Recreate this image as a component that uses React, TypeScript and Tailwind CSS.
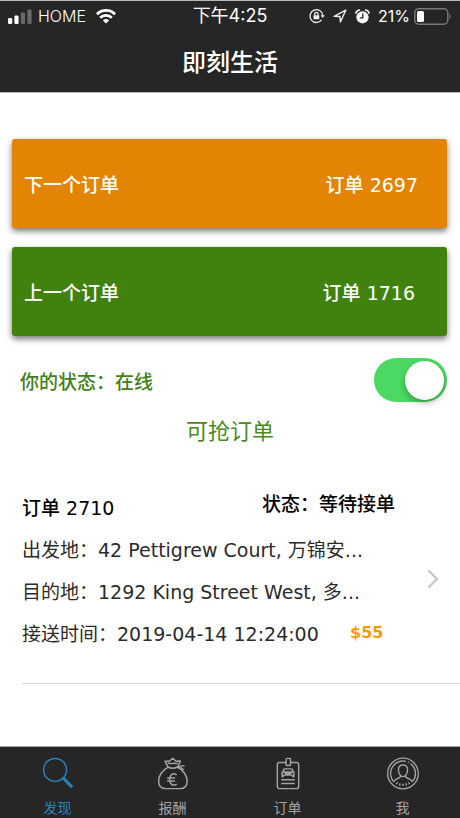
import { useState } from 'react'
import type { ReactNode } from 'react'
import clsx from 'clsx'

function SignalIcon() {
  return (
    <svg width="24" height="15" viewBox="0 0 24 15" fill="#fff" aria-hidden="true">
      <rect x="0" y="9" width="4.2" height="6" rx="1.2" />
      <rect x="6.4" y="6.5" width="4.2" height="8.5" rx="1.2" />
      <rect x="12.8" y="3.5" width="4.2" height="11.5" rx="1.2" fill="#6a6a6a" />
      <rect x="19.4" y="0.5" width="4.2" height="14.5" rx="1.2" fill="#6a6a6a" />
    </svg>
  )
}

function WifiIcon() {
  return (
    <svg width="20" height="15" viewBox="0 0 20 15" fill="none" stroke="#fff" strokeWidth="2.7" aria-hidden="true">
      <path d="M1 5.2a12.7 12.7 0 0 1 18 0" />
      <path d="M4.2 8.7a8.2 8.2 0 0 1 11.6 0" />
      <path d="M10 14.6 6.9 11.4a4.4 4.4 0 0 1 6.2 0z" fill="#fff" stroke="none" />
    </svg>
  )
}

function RotationLockIcon() {
  return (
    <svg width="16" height="16" viewBox="0 0 16 16" fill="none" stroke="#eee" strokeWidth="1.3" aria-hidden="true">
      <path d="M12.6 11.9a6.4 6.4 0 1 1 1.2-4.6" />
      <path d="M11.6 7.2h4.2l-2 2.8z" fill="#eee" stroke="none" />
      <rect x="4.5" y="7.2" width="5.8" height="4" rx="0.6" fill="#eee" stroke="none" />
      <path d="M5.7 7.4V6a1.7 1.7 0 0 1 3.4 0v1.4" />
    </svg>
  )
}

function LocationIcon() {
  return (
    <svg width="14" height="14" viewBox="0 0 14 14" fill="none" stroke="#eee" strokeWidth="1.4" strokeLinejoin="round" aria-hidden="true">
      <path d="M1.2 7.4 12.8 1.2 7.4 12.9 6.9 7.5z" />
    </svg>
  )
}

function AlarmIcon() {
  return (
    <svg width="15" height="15" viewBox="0 0 15 15" fill="none" aria-hidden="true">
      <circle cx="7.5" cy="8.3" r="6.1" fill="#fff" />
      <path d="M1 4.2A4 4 0 0 1 4.4 1M14 4.2A4 4 0 0 0 10.6 1" stroke="#fff" strokeWidth="1.6" strokeLinecap="round" />
      <path d="M7.8 4.6v4.2H4.8" stroke="#262626" strokeWidth="1.3" />
    </svg>
  )
}

function BatteryIcon() {
  return (
    <svg width="38" height="17" viewBox="0 0 38 17" fill="none" aria-hidden="true">
      <rect x="0.8" y="0.8" width="33" height="15.4" rx="4" stroke="#777" strokeWidth="1.5" />
      <rect x="3" y="3" width="7" height="11" rx="1.5" fill="#fff" />
      <path d="M35.6 6c1.6.6 1.6 4.4 0 5z" fill="#777" />
    </svg>
  )
}

function SearchIcon() {
  return (
    <svg width="34" height="34" viewBox="0 0 34 34" fill="none" stroke="currentColor" strokeWidth="1.5" aria-hidden="true">
      <circle cx="14" cy="13.3" r="11.8" />
      <path d="M21.8 22.3l2.2-2" />
      <path d="M22.6 21.9 31.6 31" strokeWidth="3.2" />
    </svg>
  )
}

function MoneyBagIcon() {
  return (
    <svg width="34" height="34" viewBox="0 0 34 34" fill="none" stroke="currentColor" strokeWidth="1.5" strokeLinejoin="round" strokeLinecap="round" aria-hidden="true">
      <path d="M11.6 10.2 8.8 4.3 13.2 4.4 16.7 1.2 20.2 4.4 24.6 4.2 21.800 10.200" />
      <path d="M11.600 10.300c3 1.400 7.200 1.400 10.300 0M12 6.600c1.400-.9 2.400.9 4.600 0s3 .7 4.600 0" />
      <path d="M11.700 10.600C6.400 13.200 2.200 19 2.200 24.600c0 5.600 2.400 8 7.400 8h14.600c5 0 7.400-2.400 7.400-8 0-5.600-4.400-11.400-9.700-14" />
      <path d="M22 10.400c2.400-.5 4-2.500 6.400-1.100M22.400 10.800c2.400-.2 4.200.2 5.400 2.200" />
      <path d="M20.400 18.100c-3.600-2.200-6.800.2-6.800 5s3.200 7.200 6.800 5M11.600 21.600h7M11.600 24.700h7" />
    </svg>
  )
}

function PermitIcon() {
  return (
    <svg width="34" height="34" viewBox="0 0 34 34" fill="none" stroke="currentColor" strokeWidth="1.5" strokeLinejoin="round" aria-hidden="true">
      <path d="M15 5.600H8.200a2.200 2.200 0 0 0-2.200 2.200v22.600a2.200 2.200 0 0 0 2.200 2.200h17.600a2.200 2.200 0 0 0 2.200-2.200V7.800a2.200 2.200 0 0 0-2.200-2.200H19.600" />
      <rect x="15" y="1.4" width="4.6" height="7.4" rx="1.2" />
      <path d="M10 23.500h14M10 27.200h14" />
      <path
        fillRule="evenodd"
        fill="currentColor"
        stroke="none"
        d="M13.200 11.600h7.600c.7 0 1.100.4 1.300 1l.8 2.200c.6.3.9.8.9 1.500v4.500h-2.600v-1.500h-8.400v1.500h-2.600v-4.500c0-.7.3-1.200.9-1.500l.8-2.200c.2-.6.6-1 1.300-1zM13.500 13l-.6 1.800h8.200l-.6-1.800zM12.600 16.200a1 1 0 1 0 .1 0zM21.400 16.200a1 1 0 1 0 .1 0z"
      />
    </svg>
  )
}

function ProfileIcon() {
  return (
    <svg width="34" height="34" viewBox="0 0 34 34" fill="none" stroke="currentColor" strokeWidth="1.4" aria-hidden="true">
      <circle cx="17" cy="17" r="15.8" />
      <path d="M7.500 25.600A12.800 12.800 0 0 1 19.800 4.500M22 5.200l1.200.6M24.800 6.800A12.800 12.800 0 0 1 26.500 25.600" />
      <path d="M17 8.200c-3 0-4.700 2-4.700 5s1.700 7 4.700 7 4.700-4 4.700-7-1.700-5-4.700-5z" />
      <path d="M14.600 19.500c-.2 1.600-1.600 2.300-3.600 2.900-1.900.6-3 1.500-3.500 3.200M19.400 19.500c.2 1.600 1.600 2.300 3.600 2.900 1.900.6 3 1.500 3.500 3.200" />
      <path d="M10.200 26.600a12 12 0 0 0 13.600 0" strokeWidth="2.4" strokeDasharray="1.4 1.8" />
    </svg>
  )
}

interface OrderCardProps {
  label: string
  order: string
  className: string
}

function OrderCard({ label, order, className }: OrderCardProps) {
  return (
    <button
      type="button"
      className={clsx(
        'flex h-[89px] w-full items-center justify-between rounded-[3px] pt-1 pl-3 text-[19px] font-medium text-white shadow-[0_3px_6px_rgba(0,0,0,0.55)]',
        className,
      )}
    >
      <span>{label}</span>
      <span>{order}</span>
    </button>
  )
}

interface TabProps {
  label: string
  icon: ReactNode
  active?: boolean
}

function Tab({ label, icon, active }: TabProps) {
  return (
    <a
      href="#"
      className={clsx('flex flex-1 flex-col items-center pt-[10px]', active ? 'text-[#2b83ba]' : 'text-[#a3a3a3]')}
    >
      {icon}
      <span className="mt-2 text-sm">{label}</span>
    </a>
  )
}

function App() {
  const [online, setOnline] = useState(true)

  return (
    <div className="flex min-h-screen flex-col bg-white font-['DejaVu_Sans','Noto_Sans_CJK_SC',sans-serif]">
      <header className="border-t border-b border-[#b8b8b8] bg-[#262626] text-white">
        <div className="grid h-[30px] grid-cols-[1fr_auto_1fr] items-center px-2 font-['Inter','Noto_Sans_CJK_SC',sans-serif] text-base">
          <div className="flex items-center gap-[6px]">
            <SignalIcon />
            <span className="font-light">HOME</span>
            <span className="ml-1">
              <WifiIcon />
            </span>
          </div>
          <span className="text-lg">下午4:25</span>
          <div className="flex items-center justify-end">
            <RotationLockIcon />
            <span className="ml-2">
              <LocationIcon />
            </span>
            <span className="ml-2">
              <AlarmIcon />
            </span>
            <span className="ml-2 mr-1">21%</span>
            <BatteryIcon />
          </div>
        </div>
        <h1 className="h-[61px] text-center text-2xl leading-[64px] font-medium">即刻生活</h1>
      </header>

      <main className="flex-1">
        <div className="space-y-[19px] pt-[46px] pl-3 pr-[13px]">
          <OrderCard label="下一个订单" order="订单 2697" className="bg-[#e38403] pr-[29px]" />
          <OrderCard label="上一个订单" order="订单 1716" className="bg-[#41820f] pr-8" />
        </div>

        <div className="mt-[22px] flex items-center justify-between pl-5 pr-[13px]">
          <label htmlFor="online" className="pt-1 text-[19px] font-medium text-[#41801a]">
            你的状态：{online ? '在线' : '离线'}
          </label>
          <input
            id="online"
            type="checkbox"
            role="switch"
            checked={online}
            onChange={(e) => setOnline(e.target.checked)}
            className="flex h-11 w-[73px] appearance-none items-center rounded-full bg-gray-300 px-[3px] transition before:size-[39px] before:rounded-full before:bg-white before:shadow-[0_3px_6px_rgba(0,0,0,0.3)] checked:justify-end checked:bg-[#4bd963]"
          />
        </div>

        <h2 className="mt-3 text-center text-[22px] leading-9 text-[#4a8a22]">可抢订单</h2>

        <ul>
          <li className="mt-9 ml-[22px] border-b border-[#d4d4d4]">
            <a href="#" className="flex items-center pb-3 text-[19px] text-[#2b2b2b]">
              <div className="flex-1 pt-px pb-4 leading-[42px] whitespace-nowrap">
                <div className="grid grid-cols-[240px_1fr] font-medium text-black">
                  <span>订单 2710</span>
                  <span className="-mt-1">状态：等待接单</span>
                </div>
                <p>出发地：42 Pettigrew Court, 万锦安...</p>
                <p>目的地：1292 King Street West, 多...</p>
                <div className="grid grid-cols-[328px_1fr]">
                  <span>接送时间：2019-04-14 12:24:00</span>
                  <span className="text-base leading-10 font-bold text-[#f59a0c]">$55</span>
                </div>
              </div>
              <svg width="12" height="20" viewBox="0 0 12 20" fill="none" stroke="#c4c4c4" strokeWidth="2.2" className="mr-[21px]" aria-hidden="true">
                <path d="M1.500 1.500 10 10 1.500 18.500" />
              </svg>
            </a>
          </li>
        </ul>
      </main>

      <nav className="flex h-[72px] border-t border-[#a8a8a8] bg-[#262626]">
        <Tab label="发现" icon={<SearchIcon />} active />
        <Tab label="报酬" icon={<MoneyBagIcon />} />
        <Tab label="订单" icon={<PermitIcon />} />
        <Tab label="我" icon={<ProfileIcon />} />
      </nav>
    </div>
  )
}

export default App
